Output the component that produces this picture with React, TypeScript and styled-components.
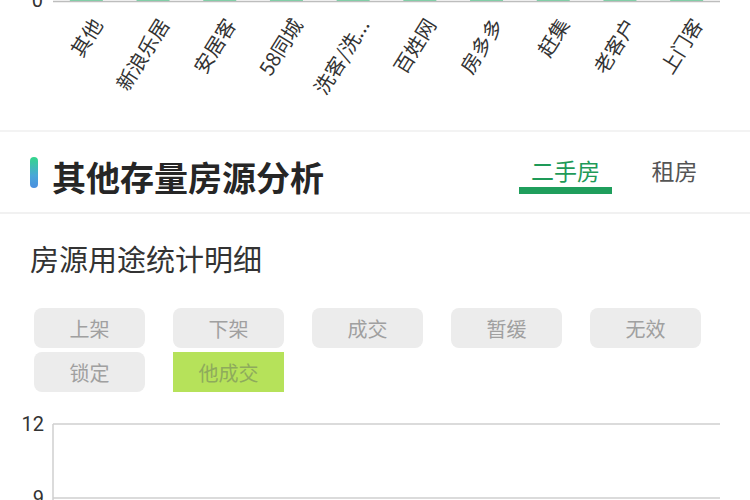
import React from "react";
import styled, { createGlobalStyle } from "styled-components";

const GlobalStyle = createGlobalStyle`
  html, body {
    margin: 0;
    padding: 0;
    background: #fff;
  }
  body {
    font-family: "Noto Sans CJK SC", "Noto Sans", sans-serif;
    color: #333;
    overflow: hidden;
  }
`;

const Page = styled.div`
  width: 750px;
  height: 500px;
  overflow: hidden;
  background: #fff;
`;

const ChartSvg = styled.svg`
  display: block;
`;

const Divider = styled.div`
  height: 2px;
  background: #f3f3f3;
`;

const Header = styled.div`
  height: 80px;
  display: flex;
  align-items: stretch;
  justify-content: space-between;
  padding: 0 29px 0 30px;
  border-bottom: 2px solid #f1f1f1;
`;

const TitleWrap = styled.div`
  display: flex;
  align-items: center;
  gap: 14px;
`;

const Accent = styled.span`
  width: 8px;
  height: 31px;
  border-radius: 4px;
  background: linear-gradient(180deg, #33d68a 0%, #4aa7d8 60%, #4a8fe0 100%);
`;

const Title = styled.h2`
  margin: 10px 0 0;
  font-size: 34px;
  font-weight: 700;
  color: #262626;
  line-height: 1;
`;

const Tabs = styled.div`
  display: flex;
  gap: 16px;
`;

const Tab = styled.div<{ $active?: boolean }>`
  width: 93px;
  padding-top: 22px;
  display: flex;
  flex-direction: column;
  align-items: center;
  font-size: 23px;
  line-height: 32px;
  color: ${(p) => (p.$active ? "#1e9a58" : "#555")};

  &::after {
    content: "";
    width: 100%;
    height: 7px;
    margin-top: 1px;
    background: ${(p) => (p.$active ? "#1f9e5c" : "transparent")};
  }
`;

const Section = styled.div`
  padding: 29px 0 0 30px;
`;

const SubTitle = styled.div`
  font-size: 29px;
  line-height: 30px;
  color: #333;
`;

const Filters = styled.div`
  margin-top: 35px;
  display: grid;
  grid-template-columns: repeat(5, 111px);
  grid-auto-rows: 40px;
  column-gap: 28px;
  row-gap: 4px;
  padding-left: 4px;
`;

const Filter = styled.div<{ $active?: boolean }>`
  display: flex;
  align-items: center;
  justify-content: center;
  font-size: 20px;
  border-radius: ${(p) => (p.$active ? "0" : "8px")};
  background: ${(p) => (p.$active ? "#b6e25a" : "#ececec")};
  color: ${(p) => (p.$active ? "#8eab5c" : "#a0a0a0")};
`;

const sources = [
  "其他",
  "新浪乐居",
  "安居客",
  "58同城",
  "洗客/洗...",
  "百姓网",
  "房多多",
  "赶集",
  "老客户",
  "上门客",
];

const filters = ["上架", "下架", "成交", "暂缓", "无效", "锁定", "他成交"];

const X0 = 53;
const X1 = 720;
const step = (X1 - X0) / sources.length;

const SourceAxis = () => (
  <ChartSvg width={750} height={130}>
    <text
      x={43}
      y={0}
      textAnchor="end"
      dominantBaseline="central"
      fontFamily="Roboto, sans-serif"
      fontSize={20}
      fill="#333"
    >
      0
    </text>
    {sources.map((s, i) => {
      const cx = X0 + step * (i + 0.5);
      return (
        <rect key={s + "b"} x={cx - 16.5} y={-10} width={33} height={11} fill="#6fd4a0" />
      );
    })}
    <line x1={X0} y1={1.5} x2={X1} y2={1.5} stroke="#bdbdbd" strokeWidth={1.5} />
    {sources.map((s, i) => {
      const cx = X0 + step * (i + 0.5);
      const ax = cx + 10;
      const ay = 20;
      return (
        <text
          key={s}
          x={ax}
          y={ay}
          textAnchor="end"
          dominantBaseline="central"
          fontSize={20}
          fill="#333"
          fontFamily='"Noto Sans CJK SC", sans-serif'
          transform={`rotate(-58 ${ax} ${ay})`}
        >
          {s}
        </text>
      );
    })}
  </ChartSvg>
);

const UsageChart = () => (
  <ChartSvg width={750} height={105} style={{ marginTop: 4 }}>
    <line x1={X0} y1={28} x2={X1} y2={28} stroke="#cfcfcf" strokeWidth={1.5} />
    <line x1={X0} y1={102} x2={X1} y2={102} stroke="#cfcfcf" strokeWidth={1.5} />
    <line x1={X0} y1={28} x2={X0} y2={105} stroke="#cfcfcf" strokeWidth={1.5} />
    <text
      x={44}
      y={28}
      textAnchor="end"
      dominantBaseline="central"
      fontFamily="Roboto, sans-serif"
      fontSize={20}
      fill="#333"
    >
      12
    </text>
    <text
      x={44}
      y={102}
      textAnchor="end"
      dominantBaseline="central"
      fontFamily="Roboto, sans-serif"
      fontSize={20}
      fill="#333"
    >
      9
    </text>
  </ChartSvg>
);

export default function App() {
  return (
    <Page>
      <GlobalStyle />
      <SourceAxis />
      <Divider />
      <Header>
        <TitleWrap>
          <Accent />
          <Title>其他存量房源分析</Title>
        </TitleWrap>
        <Tabs>
          <Tab $active>二手房</Tab>
          <Tab>租房</Tab>
        </Tabs>
      </Header>
      <Section>
        <SubTitle>房源用途统计明细</SubTitle>
        <Filters>
          {filters.map((f) => (
            <Filter key={f} $active={f === "他成交"}>
              {f}
            </Filter>
          ))}
        </Filters>
      </Section>
      <UsageChart />
    </Page>
  );
}
